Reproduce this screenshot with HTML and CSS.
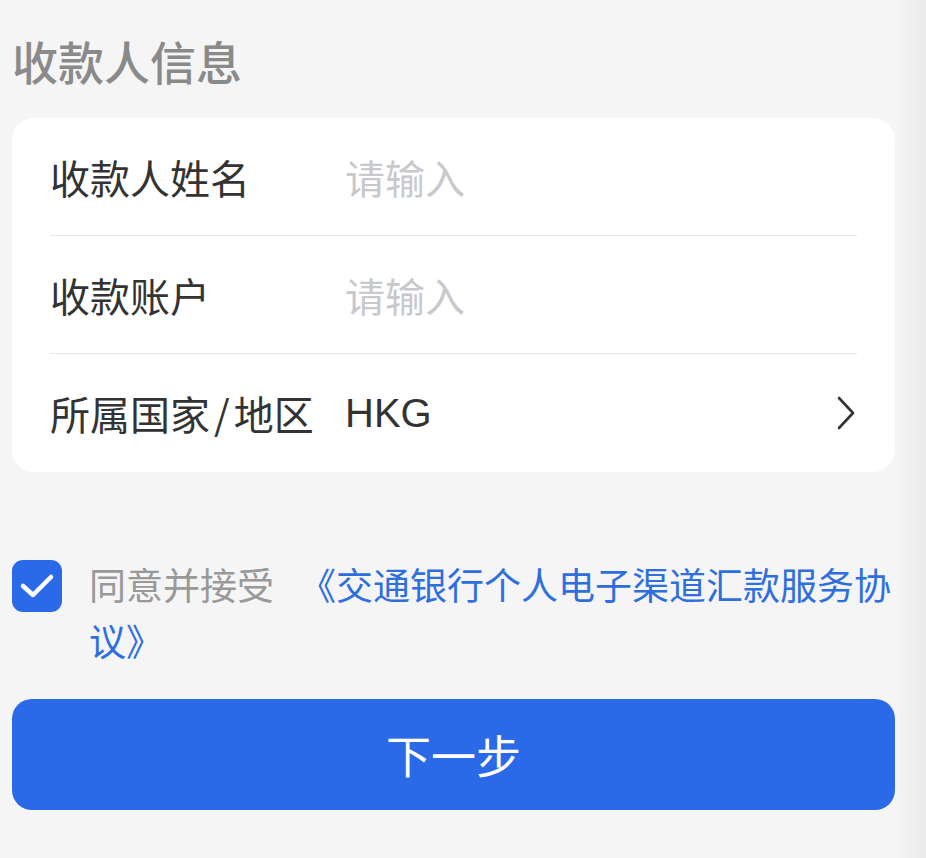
FILE: index.html
```html
<!DOCTYPE html>
<html lang="zh-CN">
<head>
<meta charset="utf-8">
<title>收款人信息</title>
<link rel="stylesheet" href="styles.css">
</head>
<body>
<div class="page">
  <main class="main">
    <h2 class="section-title">收款人信息</h2>
    <section class="card">
      <div class="row">
        <span class="label">收款人姓名</span>
        <span class="value placeholder">请输入</span>
      </div>
      <div class="row">
        <span class="label">收款账户</span>
        <span class="value placeholder">请输入</span>
      </div>
      <div class="row">
        <span class="label">所属国家<span class="slash">/</span>地区</span>
        <span class="value latin">HKG</span>
        <svg class="chevron" width="20" height="34" viewBox="0 0 20 34"><polyline points="3,2 17,17 3,32" fill="none" stroke="#333" stroke-width="2.6" stroke-linecap="round" stroke-linejoin="round"/></svg>
      </div>
    </section>
    <div class="agree">
      <span class="checkbox">
        <svg width="50" height="52" viewBox="0 0 50 52"><polyline points="11,26 21,35 39,17" fill="none" stroke="#fff" stroke-width="4.5" stroke-linecap="round" stroke-linejoin="round"/></svg>
      </span>
      <div class="agree-text">
        <div class="line"><span class="muted">同意并接受</span><span class="link">《交通银行个人电子渠道汇款服务协</span></div>
        <div class="line link">议》</div>
      </div>
    </div>
    <button class="next-btn">下一步</button>
  </main>
  <div class="edge"></div>
</div>
</body>
</html>
```

FILE: styles.css
```css
html, body {
  margin: 0;
  padding: 0;
}
body {
  background: #f5f5f6;
  font-family: "Noto Sans CJK SC", "Noto Sans", sans-serif;
  color: #333;
}
.page {
  display: flex;
  min-height: 858px;
}
.main {
  width: 898px;
  box-sizing: border-box;
  padding: 30px 3px 0 12px;
}
.edge {
  flex: 1;
  background: linear-gradient(to right, #f4f4f5, #ebebeb);
}
.section-title {
  margin: 0 0 28px 0;
  font-size: 46px;
  line-height: 60px;
  font-weight: 500;
  color: #8a8a8a;
}
.card {
  background: #fff;
  border-radius: 22px;
  padding: 0 38px;
}
.row {
  display: flex;
  align-items: center;
  height: 117px;
  border-bottom: 1px solid #e6e6e6;
}
.row:last-child {
  border-bottom: none;
  height: 118px;
}
.label {
  width: 295px;
  font-size: 40px;
  color: #333;
  flex-shrink: 0;
}
.slash {
  margin: 0 4px;
}
.value {
  font-size: 40px;
}
.placeholder {
  color: #c8c8cd;
}
.latin {
  font-family: "Liberation Sans", "Noto Sans CJK SC", sans-serif;
  color: #333;
}
.chevron {
  margin-left: auto;
  margin-right: 1px;
}
.agree {
  display: flex;
  align-items: flex-start;
  gap: 27px;
  margin-top: 84px;
}
.checkbox {
  flex-shrink: 0;
  width: 50px;
  height: 52px;
  margin-top: 4px;
  border-radius: 11px;
  background: #2a6ae8;
  display: flex;
}
.agree-text {
  font-size: 37px;
  line-height: 56px;
}
.line {
  white-space: nowrap;
}
.link {
  color: #2f6fdd;
}
.muted {
  color: #999;
  margin-right: 25px;
}
.next-btn {
  display: block;
  width: 100%;
  height: 111px;
  margin-top: 31px;
  border: none;
  border-radius: 20px;
  background: #2a6ae9;
  color: #fff;
  font-family: "Noto Sans CJK SC", sans-serif;
  font-size: 45px;
  letter-spacing: 0;
}
```
